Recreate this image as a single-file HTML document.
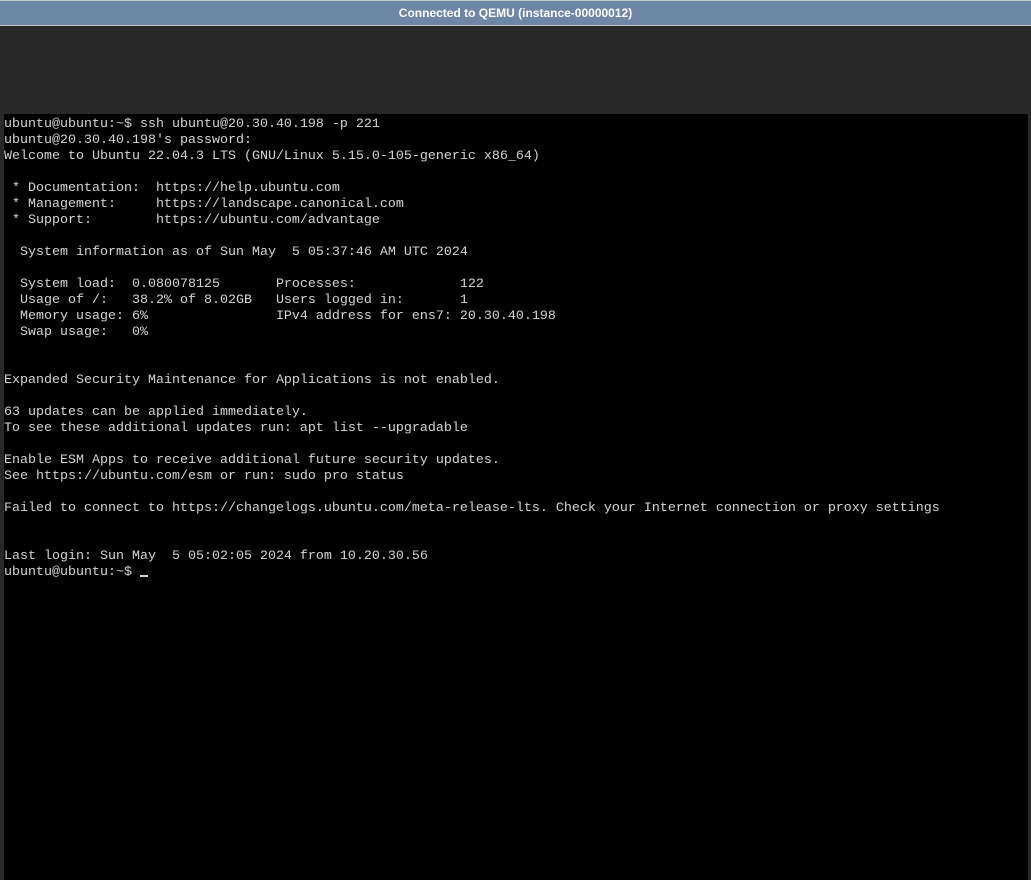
<!DOCTYPE html>
<html><head><meta charset="utf-8"><style>
html,body{margin:0;padding:0;width:1031px;height:880px;overflow:hidden;background:#282828;}
#bar{position:absolute;left:0;top:0;width:1031px;height:24px;background:#6f87a6;border-top:1px solid #c8c8c8;border-bottom:1px solid #c8c8c8;color:#fff;font:bold 12px "Liberation Sans",sans-serif;text-align:center;line-height:24px;}
#term{position:absolute;left:4px;top:114px;width:1024px;height:766px;background:#000;}
pre{margin:0;position:absolute;left:0;top:3px;color:#d4d4d4;font-family:"Liberation Mono",monospace;font-size:13.33px;line-height:16px;}
.cur{display:inline-block;width:8px;height:2px;background:#d4d4d4;vertical-align:-2px;}
</style></head><body>
<div id="bar">Connected to QEMU (instance-00000012)</div>
<div id="term"><pre>ubuntu@ubuntu:~$ ssh ubuntu@20.30.40.198 -p 221
ubuntu@20.30.40.198's password:
Welcome to Ubuntu 22.04.3 LTS (GNU/Linux 5.15.0-105-generic x86_64)

 * Documentation:  https://help.ubuntu.com
 * Management:     https://landscape.canonical.com
 * Support:        https://ubuntu.com/advantage

  System information as of Sun May  5 05:37:46 AM UTC 2024

  System load:  0.080078125       Processes:             122
  Usage of /:   38.2% of 8.02GB   Users logged in:       1
  Memory usage: 6%                IPv4 address for ens7: 20.30.40.198
  Swap usage:   0%


Expanded Security Maintenance for Applications is not enabled.

63 updates can be applied immediately.
To see these additional updates run: apt list --upgradable

Enable ESM Apps to receive additional future security updates.
See https://ubuntu.com/esm or run: sudo pro status

Failed to connect to https://changelogs.ubuntu.com/meta-release-lts. Check your Internet connection or proxy settings


Last login: Sun May  5 05:02:05 2024 from 10.20.30.56
ubuntu@ubuntu:~$ <span class="cur"></span></pre></div>
</body></html>
